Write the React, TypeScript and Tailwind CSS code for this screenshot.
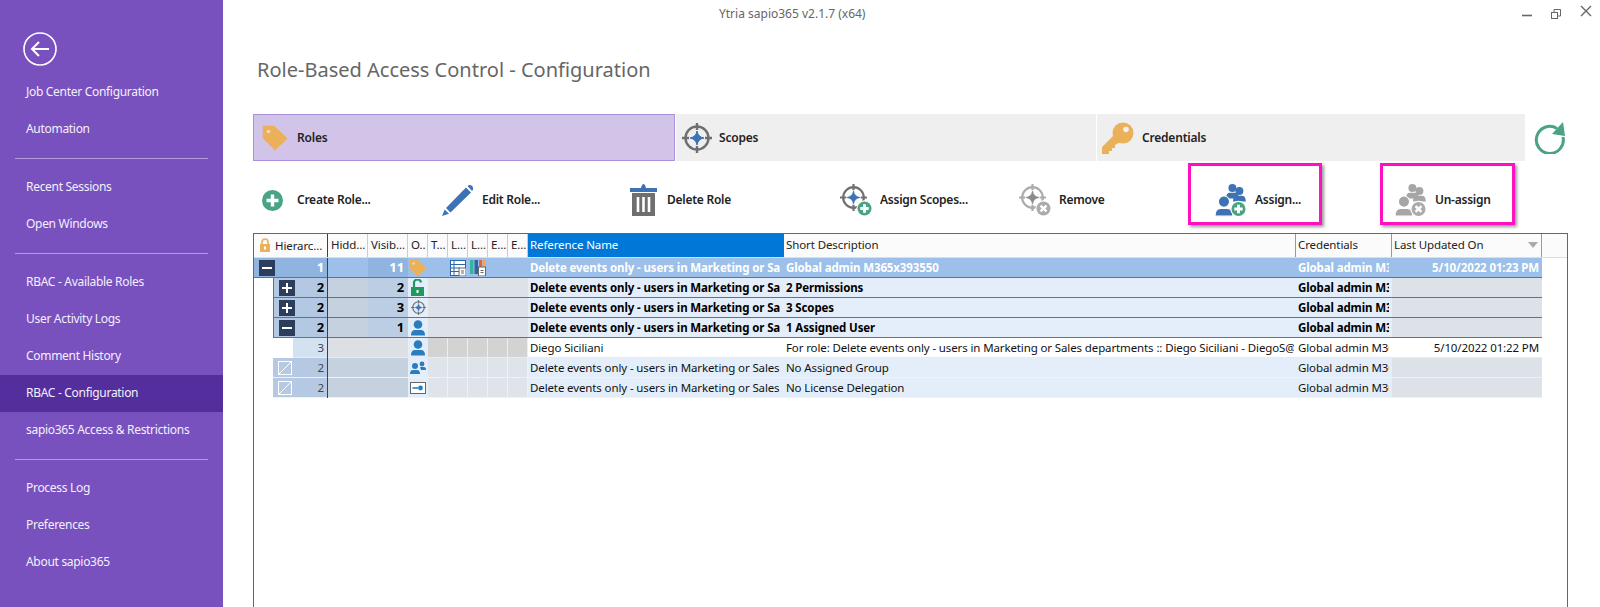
import React from "react";

const Tag = ({ s = 26 }: { s?: number }) => (
  <svg width={s} height={s} viewBox="0 0 26 26"><path d="M1.5 1.5H12L24.5 13.5L13 24.5L1.5 13Z" fill="#ebb05a" stroke="#ebb05a" strokeWidth="1.5" strokeLinejoin="round" /><circle cx="6.5" cy="6.5" r="1.8" fill="#f5dcb8" /></svg>
);
const Target = ({ s = 30, c = "#6f6f6f", d = "#3d72b4" }: { s?: number; c?: string; d?: string }) => (
  <svg width={s} height={s} viewBox="0 0 30 30"><circle cx="15" cy="15" r="11.5" fill="none" stroke={c} strokeWidth="2.4" /><path d="M15 0V7M15 23V30M0 15H7M23 15H30" stroke={c} strokeWidth="2.4" /><path d="M15 8Q16 14 22 15Q16 16 15 22Q14 16 8 15Q14 14 15 8Z" fill={d} stroke={d} /></svg>
);
const Key = () => (
  <svg width="32" height="32" viewBox="0 0 32 32"><path d="M13 12L0 25V32H7V29H10V26H13V23L20 19Z" fill="#ebb05a" /><circle cx="21" cy="11" r="10.5" fill="#ebb05a" /><circle cx="24" cy="7.5" r="2.8" fill="#efefef" /></svg>
);
const Refresh = () => (
  <svg width="32" height="32" viewBox="0 0 32 32"><path d="M23 6.5A13.5 13.5 0 1 0 29 15" fill="none" stroke="#4aa383" strokeWidth="3" /><path d="M18 12L31 14L29 0Z" fill="#4aa383" /></svg>
);
const Badge = ({ plus, cx, cy, r, gray }: { plus?: boolean; cx: number; cy: number; r: number; gray?: boolean }) => (
  <g>
    <circle cx={cx} cy={cy} r={r + 1.2} fill="#fff" />
    <circle cx={cx} cy={cy} r={r} fill={gray ? "#ababab" : "#4aa383"} />
    {plus ? (
      <path d={`M${cx - r * 0.6} ${cy}H${cx + r * 0.6}M${cx} ${cy - r * 0.6}V${cy + r * 0.6}`} stroke="#fff" strokeWidth={r * 0.42} />
    ) : (
      <path d={`M${cx - r * 0.42} ${cy - r * 0.42}L${cx + r * 0.42} ${cy + r * 0.42}M${cx + r * 0.42} ${cy - r * 0.42}L${cx - r * 0.42} ${cy + r * 0.42}`} stroke="#fff" strokeWidth={r * 0.36} />
    )}
  </g>
);
const Plus = () => (
  <svg width="21" height="21" viewBox="0 0 21 21"><circle cx="10.5" cy="10.5" r="10.5" fill="#4aa383" /><path d="M10.5 4.5V16.5M4.5 10.5H16.5" stroke="#fff" strokeWidth="3.4" /></svg>
);
const Pen = () => (
  <svg width="32" height="32" viewBox="0 0 32 32"><path d="M4 24L24 3.5L29 8.5L8.5 28.5Z" fill="#3d72b4" /><path d="M25.5 2Q28 0 30.5 2.5Q32 5 30 7Z" fill="#3d72b4" /><path d="M0 32L2.7 25.5L7 29.7Z" fill="#3d72b4" /></svg>
);
const Trash = () => (
  <svg width="27" height="32" viewBox="0 0 27 32"><path d="M0 4H11Q12 0 13.5 0Q15 0 16 4H27V8H0Z" fill="#3d72b4" /><rect x="2" y="9" width="23" height="23" fill="#6f6f6f" /><path d="M8 13V28M13.5 13V28M19 13V28" stroke="#fff" strokeWidth="2.6" /></svg>
);
const Person = ({ x, y, k, f }: { x: number; y: number; k: number; f: string }) => (
  <g transform={`translate(${x} ${y}) scale(${k})`}>
    <circle cx="8" cy="5" r="5" fill={f} />
    <path d="M0 18Q0 11 5 11H11Q16 11 16 18Z" fill={f} />
  </g>
);
const People = ({ gray }: { gray?: boolean }) => {
  const f = gray ? "#a6a6a6" : "#3d72b4";
  return (
    <svg width="32" height="33" viewBox="0 0 32 33">
      <Person x={11} y={0} k={0.8} f={f} />
      <Person x={18} y={3} k={0.8} f={f} />
      <g stroke="#fff" strokeWidth="1"><Person x={0} y={12} k={1.12} f={f} /></g>
      <Badge plus={!gray} gray={gray} cx={23.5} cy={25} r={7} />
    </svg>
  );
};
const ScopeAdd = ({ gray }: { gray?: boolean }) => {
  const c = gray ? "#ababab" : "#6f6f6f";
  const d = gray ? "#8a8a8a" : "#3d72b4";
  return (
    <svg width="32" height="32" viewBox="0 0 32 32">
      <g transform="scale(0.9)">
        <circle cx="15" cy="15" r="11.5" fill="none" stroke={c} strokeWidth="2.4" />
        <path d="M15 0V7M15 23V30M0 15H7M23 15H30" stroke={c} strokeWidth="2.4" />
        <path d="M15 8Q16 14 22 15Q16 16 15 22Q14 16 8 15Q14 14 15 8Z" fill={d} stroke={d} />
      </g>
      <Badge plus={!gray} gray={gray} cx={24.5} cy={24.5} r={7} />
    </svg>
  );
};
const BlueUser = () => (
  <svg width="16" height="16" viewBox="0 0 16 16"><circle cx="8" cy="4.5" r="4.3" fill="#2a7cbf" /><path d="M1 15.5Q1 10 5 10H11Q15 10 15 15.5Z" fill="#2a7cbf" /></svg>
);
const GroupIcon = () => (
  <svg width="16" height="14" viewBox="0 0 16 14"><circle cx="5" cy="5" r="3" fill="#2a7cbf" /><path d="M0 13Q0 9 3 9H7Q10 9 10 13Z" fill="#2a7cbf" /><circle cx="12" cy="3" r="2.4" fill="#2a7cbf" /><path d="M10 6H14Q16 6 16 9H11Z" fill="#2a7cbf" /></svg>
);
const LicIcon = () => (
  <svg width="16" height="12" viewBox="0 0 16 12"><rect x="0.5" y="0.5" width="15" height="11" fill="#fff" stroke="#666" /><path d="M2.5 6H8" stroke="#2a7cbf" strokeWidth="1.6" /><circle cx="10.5" cy="6" r="2.4" fill="#2a7cbf" /></svg>
);
const OpenLock = () => (
  <svg width="16" height="17" viewBox="0 0 16 17"><path d="M4 8V4.5A3.5 3.5 0 0 1 11 3.5" fill="none" stroke="#1f9a5f" strokeWidth="2.2" /><rect x="1" y="8" width="13" height="9" fill="#1f9a5f" /><rect x="6.5" y="11" width="2" height="3" fill="#fff" /></svg>
);
const ListIcon = () => (
  <svg width="16" height="16" viewBox="0 0 16 16"><rect x="0.5" y="0.5" width="15" height="15" fill="#fff" stroke="#2a66a8" /><path d="M0 4.5H16M0 8H10M0 11.5H10M4 0V16" stroke="#2a66a8" strokeWidth="1" /><rect x="9" y="8" width="7" height="8" fill="#fff" stroke="#666" /><path d="M11 11H14M11 13H14" stroke="#666" /></svg>
);
const ColsIcon = () => (
  <svg width="16" height="16" viewBox="0 0 16 16"><rect x="0" y="0" width="3.5" height="14" fill="#35b5a0" /><rect x="4.5" y="0" width="3.5" height="14" fill="#2a66a8" /><rect x="9" y="0" width="3" height="7" fill="#e8604c" /><rect x="12.5" y="0" width="3.5" height="7" fill="#efa94a" /><rect x="8.5" y="7" width="7" height="9" fill="#fff" stroke="#666" /><path d="M10.5 10.5H13.5M10.5 12.5H13.5" stroke="#666" /></svg>
);
const Toggle = ({ plus }: { plus?: boolean }) => (
  <svg width="16" height="16" viewBox="0 0 16 16" className="shrink-0"><rect width="16" height="16" fill="#2c3e5c" /><path d={plus ? "M3 8H13M8 3V13" : "M3 8H13"} stroke="#fff" strokeWidth="2" /></svg>
);
const Leaf = () => (
  <svg width="14" height="14" viewBox="0 0 14 14" className="shrink-0"><rect x="0.5" y="0.5" width="13" height="13" fill="none" stroke="#fff" /><path d="M1 13L13 1" stroke="#fff" /></svg>
);
const LockSmall = () => (
  <svg width="12" height="14" viewBox="0 0 12 14"><path d="M3 6V4a3 3 0 0 1 6 0V6" fill="none" stroke="#ebb05a" strokeWidth="1.7" /><rect x="1" y="6" width="10" height="8" fill="#ebb05a" /><rect x="5" y="8.5" width="2" height="3" fill="#fff" /></svg>
);

const Nav = ({ t, on }: { t: string; on?: boolean }) => (
  <div className={on ? "h-[37px] flex items-center pl-[26px] pb-[2px] bg-[#532e9c]" : "h-[37px] flex items-center pl-[26px] pb-[2px]"}>{t}</div>
);
const Sep = () => (
  <div className="h-[21px] flex items-center px-[15px] pb-[1px]"><div className="h-px w-full bg-[#b59be0]" /></div>
);

const headers = ["Hidd...", "Visib...", "O..", "T...", "L...", "L...", "E...", "E..."];

const G = "grid grid-cols-[74px_40px_40px_20px_20px_20px_20px_20px_20px_256px_512px_96px_150px] h-[20px] w-[1288px] text-[11.5px] tracking-[-0.12px] leading-[19px]";

type RowProps = {
  kind: "top" | "bold" | "child" | "leaf";
  indent: number;
  icon: React.ReactNode;
  toggle: React.ReactNode;
  h: string; v: string; name: string; desc: string; cred: string; date: string;
  extra?: boolean;
};

const styles = {
  top: { t: "font-bold text-white", line: "border-b border-[#6c7178]", h: "bg-[#8fb4e0]", hid: "bg-[#9dc0ea]", vis: "bg-[#8fb4e0]", o: "bg-[#9dc0ea]", m: "bg-[#9dc0ea]", r: "bg-[#9dc0ea]", l: "bg-[#9dc0ea]" },
  bold: { t: "font-bold text-black", line: "border-b border-[#6c7178]", h: "bg-[#b3c8e2] border-l border-l-[#6c7178]", hid: "bg-[#c6d1df]", vis: "bg-[#bccee4]", o: "bg-[#e3eefa]", m: "bg-[#dde2e8]", r: "bg-[#e3eefa]", l: "bg-[#dde2e8]" },
  child: { t: "font-normal text-[#111]", line: "border-b border-[#e8ecf1]", h: "bg-[#d3e2f1]", hid: "bg-[#dcdfe3]", vis: "bg-[#dcdfe3]", o: "bg-[#e3eefa]", m: "bg-[#d3d3d3] border-r border-r-[#eeeeee]", r: "bg-white", l: "bg-white" },
  leaf: { t: "font-normal text-[#111]", line: "border-b border-[#eef2f7]", h: "bg-[#b6c9e2]", hid: "bg-[#c6d1df]", vis: "bg-[#c6d1df]", o: "bg-[#e3eefa]", m: "bg-[#dee4ea] border-r border-r-[#eef2f7]", r: "bg-[#e3eefa]", l: "bg-[#dde2e8]" },
};

const Row = ({ kind, indent, icon, toggle, h, v, name, desc, cred, date, extra }: RowProps) => {
  const s = styles[kind];
  const c = s.line + " " + s.t + " overflow-hidden whitespace-nowrap";
  return (
    <div className={G}>
      <div className="flex border-r border-[#33415a] min-w-0">
        {indent === 19 ? <div className="w-[19px] shrink-0" /> : indent === 39 ? <div className="w-[39px] shrink-0" /> : null}
        <div className={c + " " + s.h + " flex-1 flex items-center justify-between pl-[5px] pr-[3px] " + (kind === "child" || kind === "leaf" ? "text-[#444]" : "")}>
          {toggle}
          <span className={kind === "top" || kind === "bold" ? "text-[13px] ml-auto" : "ml-auto"}>{h}</span>
        </div>
      </div>
      <div className={c + " " + s.hid} />
      <div className={c + " " + s.vis + " text-right pr-[4px] text-[13px]"}>{v}</div>
      <div className={c + " " + s.o + " flex items-center justify-center"}>{icon}</div>
      <div className={c + " " + s.m} />
      <div className={c + " " + s.m + " flex items-center justify-center"}>{extra ? <ListIcon /> : null}</div>
      <div className={c + " " + s.m + " flex items-center justify-center"}>{extra ? <ColsIcon /> : null}</div>
      <div className={c + " " + s.m} />
      <div className={c + " " + s.m} />
      <div className={c + " " + s.r + " pl-[2px] pr-[4px]"}><div className="overflow-hidden">{name}</div></div>
      <div className={c + " " + s.r + " pl-[2px] pr-[2px]"}><div className="overflow-hidden">{desc}</div></div>
      <div className={c + " " + s.r + " pl-[2px] pr-[3px]"}><div className="overflow-hidden">{cred}</div></div>
      <div className={c + " " + s.l + " text-right pr-[3px]"}>{date}</div>
    </div>
  );
};

const N = "Delete events only - users in Marketing or Sales departments";
const C = "Global admin M365x393550";

export default function App() {
  return (
    <div className="flex h-[607px] w-[1600px] overflow-hidden bg-white font-['Noto_Sans','Open_Sans',sans-serif]">
      <aside className="w-[223px] shrink-0 bg-[#7851be] text-[12px] tracking-[-0.3px] text-[#f4effc]">
        <div className="h-[74px] pt-[32px] pl-[23px]">
          <svg width="34" height="34" viewBox="0 0 34 34"><circle cx="17" cy="17" r="16" fill="none" stroke="#fff" strokeWidth="1.6" /><path d="M26 17H9M16 10L9 17L16 24" fill="none" stroke="#fff" strokeWidth="2" /></svg>
        </div>
        <Nav t="Job Center Configuration" />
        <Nav t="Automation" />
        <Sep />
        <Nav t="Recent Sessions" />
        <Nav t="Open Windows" />
        <Sep />
        <Nav t="RBAC - Available Roles" />
        <Nav t="User Activity Logs" />
        <Nav t="Comment History" />
        <Nav t="RBAC - Configuration" on />
        <Nav t="sapio365 Access & Restrictions" />
        <Sep />
        <Nav t="Process Log" />
        <Nav t="Preferences" />
        <Nav t="About sapio365" />
      </aside>
      <main className="flex-1 min-w-0 text-[#222]">
        <div className="h-[28px] flex items-center">
          <span className="ml-[496px] text-[12px] text-[#666]">Ytria sapio365 v2.1.7 (x64)</span>
          <div className="ml-auto mr-[8px] flex items-center gap-[19px]">
            <svg width="10" height="10" viewBox="0 0 10 10"><path d="M0 6.5H10" stroke="#666" strokeWidth="1.6" /></svg>
            <svg width="10" height="10" viewBox="0 0 10 10"><rect x="0.5" y="3.5" width="6" height="6" fill="none" stroke="#666" /><path d="M3 3V0.5H9.5V7H7" fill="none" stroke="#666" /></svg>
            <svg width="12" height="12" viewBox="0 0 12 12" className="-mt-[6px]"><path d="M1 1L11 11M11 1L1 11" stroke="#666" strokeWidth="1.4" /></svg>
          </div>
        </div>
        <div className="h-[86px] pl-[34px] pt-[27px]">
          <h1 className="text-[20px] leading-[30px] font-normal text-[#666]">Role-Based Access Control - Configuration</h1>
        </div>
        <div className="flex ml-[30px] items-center">
          <div className="flex h-[47px] w-[1272px] gap-px text-[12px] font-semibold tracking-[-0.2px] text-[#222]">
            <div className="w-[422px] flex items-center bg-[#d2c3e8] border border-[#ab90de] pl-[8px]">
              <Tag /><span className="ml-[9px]">Roles</span>
            </div>
            <div className="w-[420px] flex items-center bg-[#efefef] pl-[6px]">
              <Target /><span className="ml-[7px]">Scopes</span>
            </div>
            <div className="flex-1 flex items-center bg-[#efefef] pl-[5px]">
              <Key /><span className="ml-[8px]">Credentials</span>
            </div>
          </div>
          <div className="ml-[9px]"><Refresh /></div>
        </div>
        <div className="flex ml-[30px] mt-[2px] h-[62px] text-[12px] font-semibold tracking-[-0.25px] text-[#222]">
          <div className="w-[189px] pl-[9px] pt-[12px] flex items-center"><Plus /><span className="ml-[14px]">Create Role...</span></div>
          <div className="w-[188px] pt-[12px] flex items-center"><Pen /><span className="ml-[8px]">Edit Role...</span></div>
          <div className="w-[210px] pt-[12px] flex items-center"><Trash /><span className="ml-[10px]">Delete Role</span></div>
          <div className="w-[179px] pt-[12px] flex items-center"><ScopeAdd /><span className="ml-[8px]">Assign Scopes...</span></div>
          <div className="w-[169px] pt-[12px] flex items-center"><ScopeAdd gray /><span className="ml-[8px]">Remove</span></div>
          <div className="w-[134px] border-[3px] border-[#ff10c0] shadow-[2px_2px_3px_rgba(0,0,0,0.4)] pl-[24px] pt-[12px] flex items-center"><People /><span className="ml-[8px]">Assign...</span></div>
          <div className="ml-[58px] w-[135px] border-[3px] border-[#ff10c0] shadow-[2px_2px_3px_rgba(0,0,0,0.4)] pl-[12px] pt-[12px] flex items-center"><People gray /><span className="ml-[8px]">Un-assign</span></div>
        </div>
        <div className="ml-[30px] mt-[8px] w-[1315px] h-[374px] border-l border-r border-t border-[#666]">
          <div className="h-[24px] border-b border-[#dddddd] bg-[#fbfbfb]">
            <div className="grid grid-cols-[74px_40px_40px_20px_20px_20px_20px_20px_20px_256px_512px_96px_150px] h-[23px] w-[1288px] text-[11.5px] tracking-[-0.1px] leading-[21px] text-[#222] whitespace-nowrap">
              <div className="flex items-center pl-[5px] pb-[1px] border-r border-[#33415a]"><LockSmall /><span className="ml-[4px]">Hierarc...</span></div>
              {headers.map((t, i) => (
                <div key={i} className="pl-[3px] border-r border-[#cccccc] overflow-hidden">{t}</div>
              ))}
              <div className="pl-[2px] bg-[#0078d7] text-white">Reference Name</div>
              <div className="pl-[2px] border-r border-[#999999]">Short Description</div>
              <div className="pl-[2px] border-r border-[#999999]">Credentials</div>
              <div className="pl-[2px] pb-[2px] flex items-center justify-between pr-[3px] border-r border-[#999999]">
                <span>Last Updated On</span>
                <svg width="10" height="6" viewBox="0 0 10 6"><path d="M0 0H10L5 6Z" fill="#aaaaaa" /></svg>
              </div>
            </div>
          </div>
          <Row kind="top" indent={0} toggle={<Toggle />} h="1" v="11" icon={<Tag s={18} />} name={N} desc="Global admin M365x393550" cred={C} date="5/10/2022 01:23 PM" extra />
          <Row kind="bold" indent={19} toggle={<Toggle plus />} h="2" v="2" icon={<OpenLock />} name={N} desc="2 Permissions" cred={C} date="" />
          <Row kind="bold" indent={19} toggle={<Toggle plus />} h="2" v="3" icon={<Target s={15} />} name={N} desc="3 Scopes" cred={C} date="" />
          <Row kind="bold" indent={19} toggle={<Toggle />} h="2" v="1" icon={<BlueUser />} name={N} desc="1 Assigned User" cred={C} date="" />
          <Row kind="child" indent={39} toggle={null} h="3" v="" icon={<BlueUser />} name="Diego Siciliani" desc="For role: Delete events only - users in Marketing or Sales departments :: Diego Siciliani - DiegoS@M365x393550.OnMicrosoft.com" cred={C} date="5/10/2022 01:22 PM" />
          <Row kind="leaf" indent={19} toggle={<Leaf />} h="2" v="" icon={<GroupIcon />} name={N} desc="No Assigned Group" cred={C} date="" />
          <Row kind="leaf" indent={19} toggle={<Leaf />} h="2" v="" icon={<LicIcon />} name={N} desc="No License Delegation" cred={C} date="" />
        </div>
      </main>
    </div>
  );
}
